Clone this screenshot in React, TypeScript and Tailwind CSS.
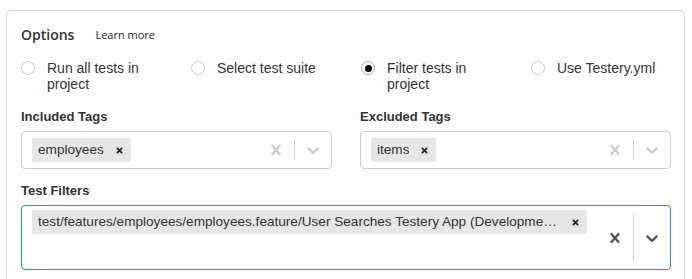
import React from "react";

const sans = { fontFamily: '"Liberation Sans", Arial, sans-serif' };

const CrossIcon = ({ className }: { className?: string }) => (
  <svg viewBox="0 0 20 20" width={20} height={20} className={className} fill="currentColor">
    <path d="M14.348 14.849c-0.469 0.469-1.229 0.469-1.697 0l-2.651-3.030-2.651 3.029c-0.469 0.469-1.229 0.469-1.697 0-0.469-0.469-0.469-1.229 0-1.697l2.758-3.150-2.759-3.152c-0.469-0.469-0.469-1.228 0-1.697s1.228-0.469 1.697 0l2.652 3.031 2.651-3.031c0.469-0.469 1.228-0.469 1.697 0s0.469 1.229 0 1.697l-2.758 3.152 2.758 3.150c0.469 0.469 0.469 1.229 0 1.698z" />
  </svg>
);

const ChevronIcon = ({ className }: { className?: string }) => (
  <svg viewBox="0 0 20 20" width={20} height={20} className={className} fill="currentColor">
    <path d="M4.516 7.548c0.436-0.446 1.043-0.481 1.576 0l3.908 3.747 3.908-3.747c0.533-0.481 1.141-0.446 1.574 0 0.436 0.445 0.408 1.197 0 1.615-0.406 0.418-4.695 4.502-4.695 4.502-0.217 0.223-0.502 0.335-0.787 0.335s-0.57-0.112-0.789-0.335c0 0-4.287-4.084-4.695-4.502s-0.436-1.17 0-1.615z" />
  </svg>
);

const ChipX = () => (
  <svg viewBox="0 0 8 8" width={7} height={7} className="text-[#222]">
    <path d="M1 1L7 7M7 1L1 7" stroke="currentColor" strokeWidth={2} />
  </svg>
);

const Chip = ({ label, full }: { label: string; full?: boolean }) => (
  <div
    className={`m-[2px] flex h-[24px] items-center rounded-[2px] bg-[#e6e6e6] ${full ? "min-w-0 flex-1" : ""}`}
  >
    <span className="min-w-0 truncate pl-[6px] text-[13.6px] text-[#333]">{label}</span>
    <span className="ml-[12px] mr-[8px] flex shrink-0 items-center">
      <ChipX />
    </span>
  </div>
);

const Indicators = ({ focused }: { focused?: boolean }) => (
  <div className={`flex shrink-0 items-stretch ${focused ? "text-[#555]" : "text-[#ccc]"}`}>
    <div className="flex items-center p-[8px]">
      <CrossIcon />
    </div>
    <span className="my-[8px] w-px bg-[#ccc]" />
    <div className="flex items-center p-[8px]">
      <ChevronIcon />
    </div>
  </div>
);

const Radio = ({ label, checked }: { label: string; checked?: boolean }) => (
  <div className="flex w-[170px] shrink-0 items-start">
    <span
      className={`mt-px flex h-[14px] w-[14px] shrink-0 items-center justify-center rounded-full border ${
        checked ? "border-[#aaa]" : "border-[#ccc]"
      }`}
    >
      {checked && <span className="h-[7px] w-[7px] rounded-full bg-black" />}
    </span>
    <span className="ml-[12px] w-[116px] text-[14px] leading-[16px] text-[#333]">{label}</span>
  </div>
);

export default function App() {
  return (
    <div className="h-[279px] w-[692px] overflow-hidden bg-white pl-[6px] pt-[10px]" style={sans}>
      <div className="h-[300px] w-[679px] rounded-[4px] border border-[#dcdcdc] pl-[14px] pr-[13px] pt-[14px]">
        <div className="flex items-center" style={{ fontFamily: '"Open Sans", sans-serif' }}>
          <h2 className="text-[14px] font-semibold leading-[20px] text-[#333]">Options</h2>
          <a className="ml-[21px] text-[11px] leading-[20px] text-[#222]">Learn more</a>
        </div>

        <div className="mt-[15px] flex">
          <Radio label="Run all tests in project" />
          <Radio label="Select test suite" />
          <Radio label="Filter tests in project" checked />
          <Radio label="Use Testery.yml" />
        </div>

        <div className="mt-[17px] grid grid-cols-2 gap-x-[28px]">
          <div>
            <label className="mb-[6px] block text-[13px] font-bold leading-[16px] text-[#333]">Included Tags</label>
            <div className="flex h-[38px] items-stretch rounded-[4px] border border-[#ccc] bg-white">
              <div className="flex min-w-0 flex-1 items-center px-[8px] py-[2px]">
                <Chip label="employees" />
              </div>
              <Indicators />
            </div>
          </div>
          <div>
            <label className="mb-[6px] block text-[13px] font-bold leading-[16px] text-[#333]">Excluded Tags</label>
            <div className="flex h-[38px] items-stretch rounded-[4px] border border-[#ccc] bg-white">
              <div className="flex min-w-0 flex-1 items-center px-[8px] py-[2px]">
                <Chip label="items" />
              </div>
              <Indicators />
            </div>
          </div>
        </div>

        <div className="mt-[14px]">
          <label className="mb-[6px] block text-[13px] font-bold leading-[16px] text-[#333]">Test Filters</label>
          <div className="flex h-[65px] items-stretch rounded-[4px] border border-[#2684ff] bg-white">
            <div className="flex min-w-0 flex-1 flex-col px-[8px] py-[2px]">
              <div className="flex min-w-0">
                <Chip
                  full
                  label="test/features/employees/employees.feature/User Searches Testery App (Development) for Employees"
                />
              </div>
            </div>
            <Indicators focused />
          </div>
        </div>
      </div>
    </div>
  );
}
